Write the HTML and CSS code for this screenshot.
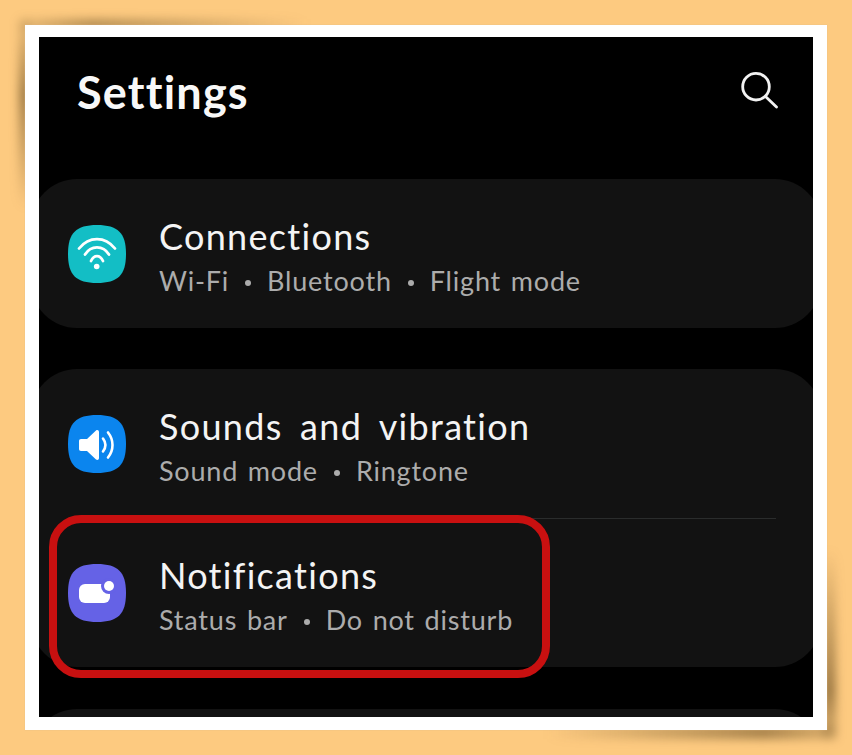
FILE: index.html
```html
<!DOCTYPE html>
<html lang="en">
<head>
  <meta charset="UTF-8" />
  <title>Settings</title>
  <link rel="stylesheet" href="styles.css">
</head>
<body>
  <div class="frame">
    <div class="screen">
      <header class="top">
        <h1>Settings</h1>
        <svg class="search" width="38" height="38" viewBox="0 0 38 38" fill="none" stroke="#f2f2f2" stroke-width="2.8" stroke-linecap="round">
          <circle cx="16" cy="14.700" r="13.300"/>
          <path d="M25.500 24.500l11 10.500"/>
        </svg>
      </header>

      <section class="card">
        <div class="row">
          <svg class="icon" width="58" height="58" viewBox="0 0 58 58">
            <path fill="#13bec5" d="M29 0C50 0 58 8 58 29S50 58 29 58 0 50 0 29 8 0 29 0z"/>
            <g fill="none" stroke="#fff" stroke-width="2.800" stroke-linecap="round">
              <path d="M11 23.500C21 11 37 11 47 23.500"/>
              <path d="M17 29.500C23 20 35 20 41 29.500"/>
              <path d="M23 36C26 29.500 32 29.500 35 36"/>
            </g>
            <circle cx="28.700" cy="41.500" r="2.800" fill="#fff"/>
          </svg>
          <div class="label">
            <div class="title">Connections</div>
            <div class="sub">Wi-Fi<span class="dot"></span>Bluetooth<span class="dot"></span>Flight mode</div>
          </div>
        </div>
      </section>

      <section class="card">
        <div class="row">
          <svg class="icon" width="58" height="58" viewBox="0 0 58 58">
            <path fill="#0b85ee" d="M29 0C50 0 58 8 58 29S50 58 29 58 0 50 0 29 8 0 29 0z"/>
            <path fill="#fff" d="M11 26c0-1.200.8-2 2-2h6l9-8.500c1.300-1 3-.4 3 1.500v26c0 1.900-1.700 2.500-3 1.500L19 36h-6c-1.200 0-2-.8-2-2z"/>
            <g fill="none" stroke="#fff" stroke-width="2.600" stroke-linecap="round">
              <path d="M35 23.500c3 4 3 9 0 13"/>
              <path d="M40 17.500c6 7.500 6 17.500 0 25"/>
            </g>
          </svg>
          <div class="label">
            <div class="title">Sounds and vibration</div>
            <div class="sub">Sound mode<span class="dot"></span>Ringtone</div>
          </div>
        </div>
        <div class="divider"></div>
        <div class="row">
          <svg class="icon" width="58" height="58" viewBox="0 0 58 58">
            <path fill="#6562e6" d="M29 0C50 0 58 8 58 29S50 58 29 58 0 50 0 29 8 0 29 0z"/>
            <rect x="11" y="20" width="31" height="19" rx="6" fill="#fff"/>
            <circle cx="41" cy="22" r="8" fill="#6562e6"/>
            <circle cx="41" cy="22" r="5" fill="#fff"/>
          </svg>
          <div class="label">
            <div class="title">Notifications</div>
            <div class="sub">Status bar<span class="dot"></span>Do not disturb</div>
          </div>
        </div>
      </section>

      <section class="card"></section>

      <div class="highlight"></div>
    </div>
  </div>
</body>
</html>
```

FILE: styles.css
```css
html, body {
  height: 100%;
}

body {
  margin: 0;
  background: #fdca80;
  font-family: 'Lato', 'Noto Sans', sans-serif;
  overflow: hidden;
}

.frame {
  position: relative;
  box-sizing: border-box;
  width: 802px;
  height: 705px;
  margin: 25px 0 0 25px;
  padding: 12px 14px 13px;
  background: #fff;
  box-shadow: 0 0 1px #d9b98a;
}
/* soft shadow near the top-left and bottom-right corners, fading along the edges */
.frame::before,
.frame::after {
  content: '';
  position: absolute;
  z-index: -1;
  width: 290px;
  height: 190px;
  filter: blur(5px);
  background-repeat: no-repeat;
}
.frame::before {
  top: -6px;
  left: -6px;
  background-image:
    linear-gradient(to right, rgba(95, 70, 30, 0.1), rgba(95, 70, 30, 0.45) 25%, rgba(95, 70, 30, 0)),
    linear-gradient(to bottom, rgba(95, 70, 30, 0.1), rgba(95, 70, 30, 0.6) 40%, rgba(95, 70, 30, 0));
  background-size: 100% 12px, 12px 100%;
  background-position: 0 0, 0 0;
}
.frame::after {
  right: -9px;
  bottom: -9px;
  background-image:
    linear-gradient(to left, rgba(95, 70, 30, 0.2), rgba(95, 70, 30, 0.55) 25%, rgba(95, 70, 30, 0)),
    linear-gradient(to top, rgba(95, 70, 30, 0.2), rgba(95, 70, 30, 0.6) 25%, rgba(95, 70, 30, 0));
  background-size: 100% 14px, 14px 100%;
  background-position: 100% 100%, 100% 100%;
}

.screen {
  position: relative;
  height: 680px;
  background: #000;
  overflow: hidden;
}

.top {
  display: flex;
  justify-content: space-between;
  align-items: flex-start;
  height: 142px;
  padding: 0 35px 0 38px;
  box-sizing: border-box;
}
.top h1 {
  margin: 27px 0 0;
  font-size: 45px;
  line-height: 56px;
  font-weight: 700;
  letter-spacing: 1.2px;
  color: #f8f8f8;
}
.search {
  margin-top: 35px;
}

.card {
  margin: 0 -8px 41px;
  background: #121212;
  border-radius: 46px;
}
.card:empty {
  height: 100px;
  margin-top: 42px;
  margin-bottom: 0;
}

.row {
  display: flex;
  align-items: center;
  height: 149px;
  padding-left: 37px;
}
.icon {
  flex: none;
  margin-right: 33px;
}

.label {
  padding-top: 5px;
}
.title {
  font-size: 36px;
  line-height: 44px;
  letter-spacing: 1.3px;
  word-spacing: 7px;
  color: #f4f4f4;
}
.sub {
  margin-top: 6px;
  font-size: 27px;
  line-height: 34px;
  letter-spacing: 0.8px;
  word-spacing: 2px;
  color: #acacac;
}
.dot {
  display: inline-block;
  width: 6px;
  height: 6px;
  margin: 0 16px;
  border-radius: 50%;
  background: #acacac;
  vertical-align: 5px;
}

.divider {
  height: 1px;
  margin: 0 45px -1px 129px;
  background: #2a2c2c;
}

.highlight {
  position: absolute;
  left: 10px;
  top: 478px;
  box-sizing: border-box;
  width: 501px;
  height: 163px;
  border: 8px solid #c81010;
  border-radius: 32px;
}
```
